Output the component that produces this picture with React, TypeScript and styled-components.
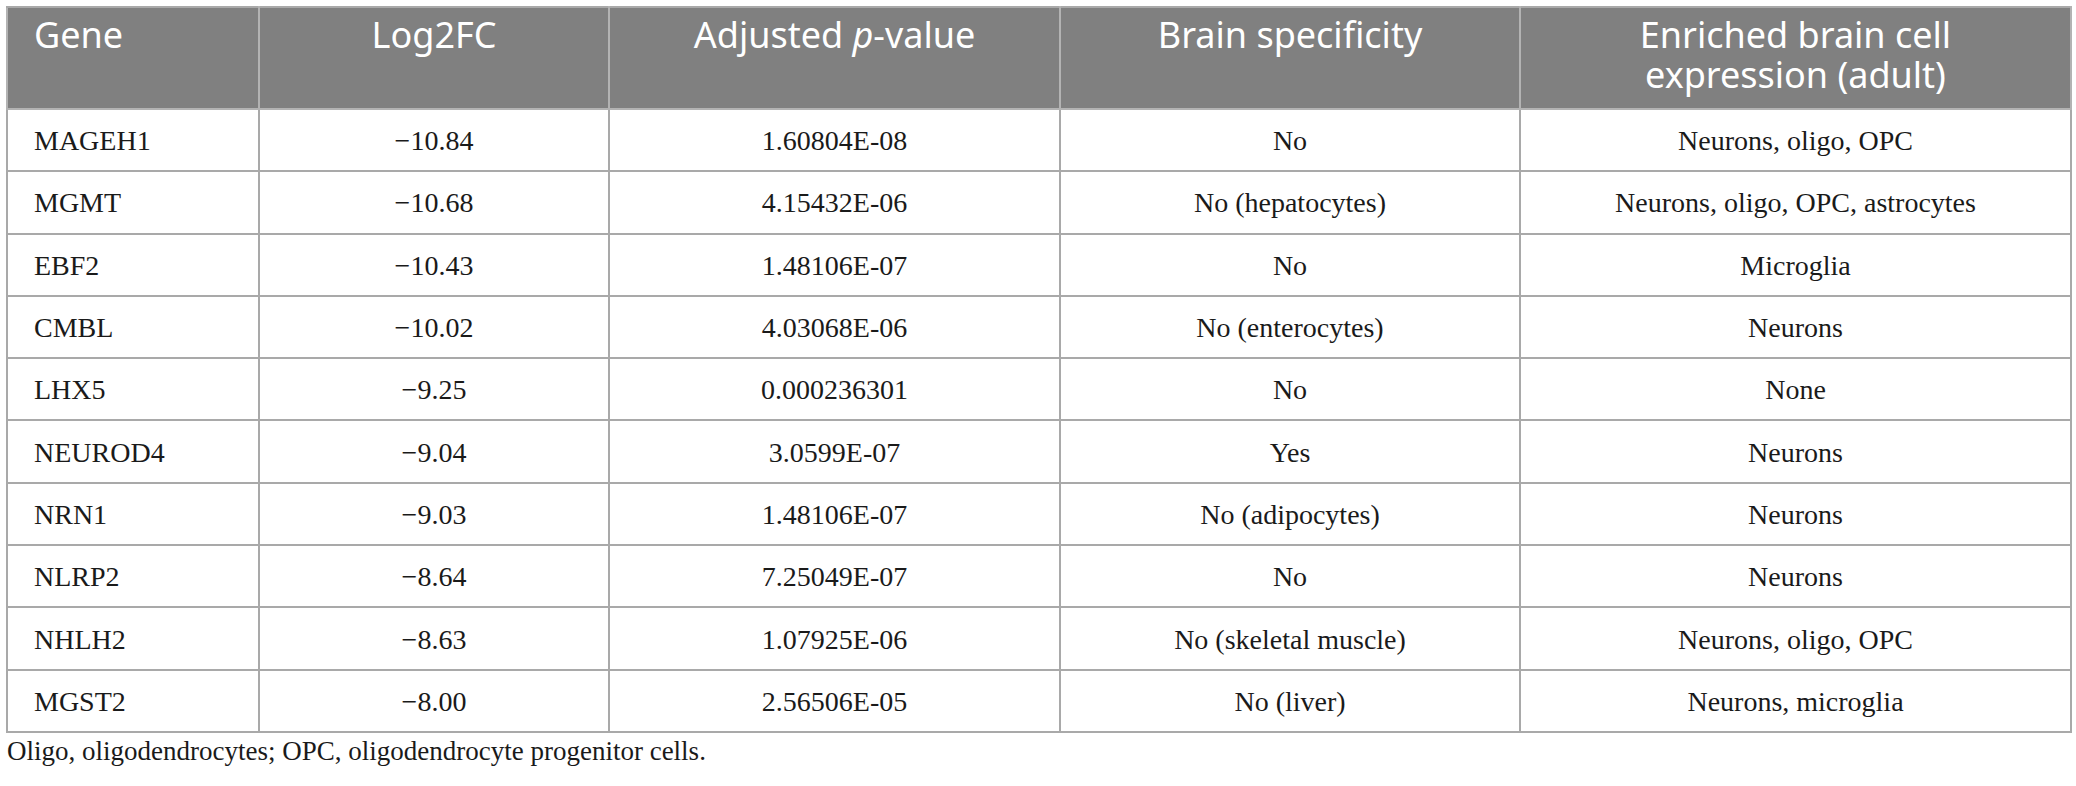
import { FC } from 'react';
import styled, { createGlobalStyle } from 'styled-components';

const GlobalStyle = createGlobalStyle`
  html, body {
    margin: 0;
    padding: 0;
    background: #fff;
  }
  body {
    font-family: 'Liberation Serif', 'Times New Roman', serif;
  }
`;

const Page = styled.div`
  padding: 6px 6px 0 6px;
  width: 2064px;
`;

const Table = styled.table`
  width: 2064px;
  border-collapse: collapse;
  table-layout: fixed;
  border: 2px solid #a9a9a9;
`;

const HeadCell = styled.th<{ $align?: 'left' | 'center' }>`
  height: 93px;
  padding: 7px 26px 0 26px;
  vertical-align: top;
  background: #808080;
  color: #fff;
  font-family: 'Noto Sans', 'Open Sans', sans-serif;
  font-weight: 400;
  font-size: 36px;
  line-height: 40px;
  text-align: ${(p) => p.$align || 'center'};
  border: 2px solid #b3b3b3;
  border-top-color: #a9a9a9;
`;

const Cell = styled.td<{ $align?: 'left' | 'center' }>`
  height: 58.3px;
  padding: 2px 26px 0 26px;
  vertical-align: middle;
  color: #1a1a1a;
  font-size: 28px;
  line-height: 32px;
  text-align: ${(p) => p.$align || 'center'};
  border: 2px solid #a9a9a9;
`;

const Footnote = styled.p`
  margin: 2px 0 0 1px;
  font-size: 27px;
  line-height: 32px;
  color: #1a1a1a;
`;

const rows = [
  ['MAGEH1', '\u221210.84', '1.60804E-08', 'No', 'Neurons, oligo, OPC'],
  ['MGMT', '\u221210.68', '4.15432E-06', 'No (hepatocytes)', 'Neurons, oligo, OPC, astrocytes'],
  ['EBF2', '\u221210.43', '1.48106E-07', 'No', 'Microglia'],
  ['CMBL', '\u221210.02', '4.03068E-06', 'No (enterocytes)', 'Neurons'],
  ['LHX5', '\u22129.25', '0.000236301', 'No', 'None'],
  ['NEUROD4', '\u22129.04', '3.0599E-07', 'Yes', 'Neurons'],
  ['NRN1', '\u22129.03', '1.48106E-07', 'No (adipocytes)', 'Neurons'],
  ['NLRP2', '\u22128.64', '7.25049E-07', 'No', 'Neurons'],
  ['NHLH2', '\u22128.63', '1.07925E-06', 'No (skeletal muscle)', 'Neurons, oligo, OPC'],
  ['MGST2', '\u22128.00', '2.56506E-05', 'No (liver)', 'Neurons, microglia']
];

const widths = [252, 350, 451, 460, 551];

const App: FC = () => {
  return (
    <Page>
      <GlobalStyle />
      <Table>
        <colgroup>
          {widths.map((w, i) => (
            <col key={i} style={{ width: w }} />
          ))}
        </colgroup>
        <thead>
          <tr>
            <HeadCell $align="left">Gene</HeadCell>
            <HeadCell>Log2FC</HeadCell>
            <HeadCell>
              Adjusted <i>p</i>-value
            </HeadCell>
            <HeadCell>Brain specificity</HeadCell>
            <HeadCell>
              Enriched brain cell
              <br />
              expression (adult)
            </HeadCell>
          </tr>
        </thead>
        <tbody>
          {rows.map((r) => (
            <tr key={r[0]}>
              {r.map((v, i) => (
                <Cell key={i} $align={i === 0 ? 'left' : 'center'}>
                  {v}
                </Cell>
              ))}
            </tr>
          ))}
        </tbody>
      </Table>
      <Footnote>Oligo, oligodendrocytes; OPC, oligodendrocyte progenitor cells.</Footnote>
    </Page>
  );
};

export default App;
